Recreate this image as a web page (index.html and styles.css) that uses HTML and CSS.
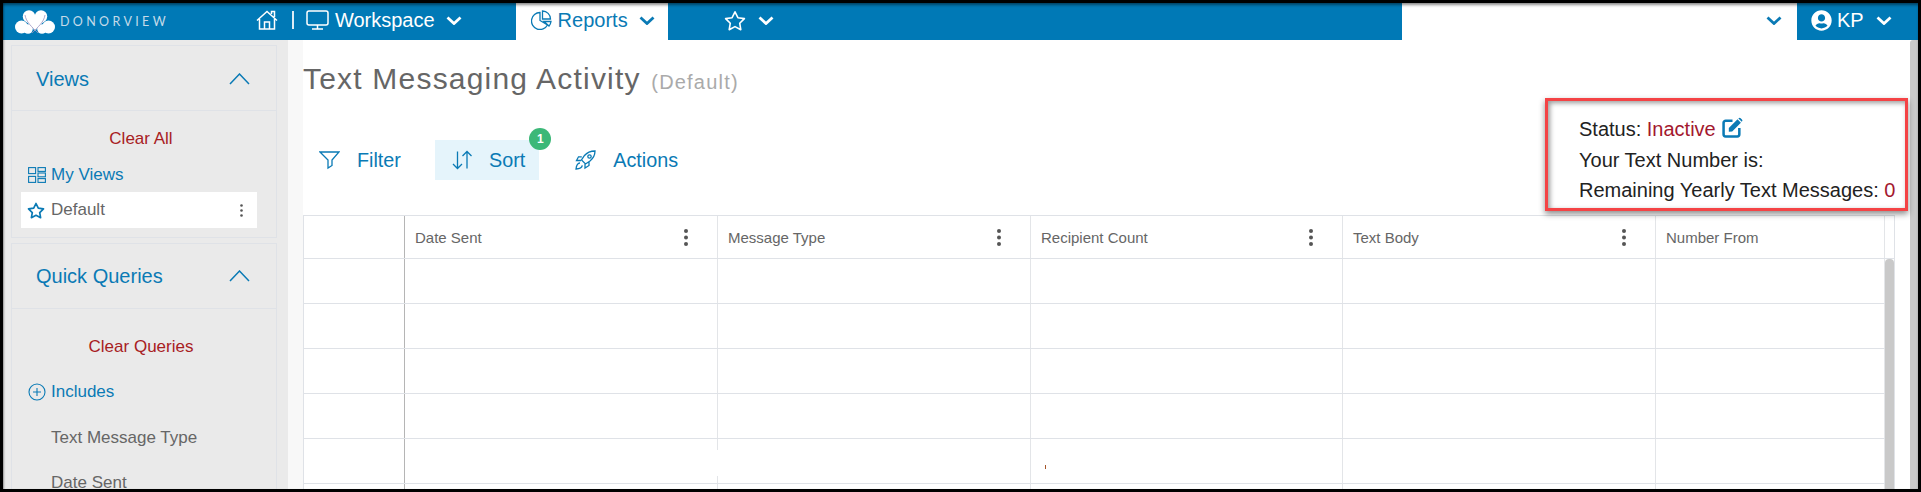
FILE: index.html
```html
<!DOCTYPE html>
<html lang="en">
<head>
<meta charset="utf-8">
<title>Text Messaging Activity</title>
<link rel="stylesheet" href="styles.css">
</head>
<body>
<div class="frame">
  <header class="nav">
    <div class="nav-left">
      <svg class="logo" viewBox="0 0 40 24">
        <g class="logo-fill">
          <circle cx="14" cy="6.500" r="6.200"/><circle cx="26" cy="6.500" r="6.200"/>
          <circle cx="6.500" cy="17" r="6.500"/><circle cx="33.500" cy="17" r="6.500"/>
          <circle cx="13" cy="19" r="4.800"/><circle cx="27" cy="19" r="4.800"/>
          <path d="M9 9 L20 21 L31 9 L26 3 L20 5 L14 3 Z"/>
        </g>
        <path class="logo-line" d="M10 5 C11 12 17 17 23 23 M30 5 C29 12 23 17 17 23"/>
      </svg>
      <span class="brand">DONORVIEW</span>
      <svg class="ico-home" viewBox="0 0 22 20"><path d="M1 10.500 L11 1.500 L21 10.500 M3.500 9 V19 H18.500 V9 M8.500 19 V12 H13.500 V19 M15.500 4 V1.500 H18.500 V7"/></svg>
      <span class="pipe"></span>
      <svg class="ico-monitor" viewBox="0 0 23 20"><rect x="1" y="1" width="21" height="14" rx="2"/><path d="M11.500 15 V19 M6 19 H17"/></svg>
      <span class="nav-text">Workspace</span>
      <svg class="chev chev-work" viewBox="0 0 16 9"><path d="M1.500 1.500 L8 7.500 L14.500 1.500"/></svg>
      <div class="tab">
        <svg class="ico-pie" viewBox="0 0 21 20"><path d="M9 2.500 A8.500 8.500 0 1 0 16.500 15 L9 10.500 Z M11.500 1 A8 8 0 0 1 19.500 9 H11.500 Z M13 11.500 H20 A8 8 0 0 1 18 16 Z"/></svg>
        <span class="nav-text">Reports</span>
        <svg class="chev chev-tab" viewBox="0 0 16 9"><path d="M1.500 1.500 L8 7.500 L14.500 1.500"/></svg>
      </div>
      <svg class="ico-star-nav" viewBox="0 0 22 21"><path d="M11 1.800 L13.900 7.700 L20.400 8.600 L15.700 13.200 L16.800 19.700 L11 16.600 L5.200 19.700 L6.300 13.200 L1.600 8.600 L8.100 7.700 Z"/></svg>
      <svg class="chev chev-fav" viewBox="0 0 16 9"><path d="M1.500 1.500 L8 7.500 L14.500 1.500"/></svg>
    </div>
    <div class="nav-gap">
      <svg class="chev chev-gap" viewBox="0 0 16 9"><path d="M1.500 1.500 L8 7.500 L14.500 1.500"/></svg>
    </div>
    <div class="nav-user">
      <svg class="ico-user" viewBox="0 0 496 512"><path fill-rule="evenodd" d="M248 8C111 8 0 119 0 256s111 248 248 248 248-111 248-248S385 8 248 8zm0 96c48.600 0 88 39.400 88 88s-39.400 88-88 88-88-39.400-88-88 39.400-88 88-88zm0 344c-58.700 0-111.300-26.600-146.500-68.200 18.800-35.400 55.600-59.800 98.500-59.800 2.400 0 4.800.4 7.100 1.100 13 4.200 26.600 6.900 40.900 6.900 14.300 0 28-2.700 40.900-6.900 2.300-.7 4.700-1.100 7.100-1.100 42.900 0 79.700 24.400 98.500 59.800C359.300 421.400 306.700 448 248 448z"/></svg>
      <span class="nav-text">KP</span>
      <svg class="chev chev-user" viewBox="0 0 16 9"><path d="M1.500 1.500 L8 7.500 L14.500 1.500"/></svg>
    </div>
  </header>

  <div class="layout">
    <aside class="sidebar">
      <section class="panel panel-views">
        <div class="panel-head head-views">
          <span>Views</span>
          <svg class="chev-up" viewBox="0 0 21 12"><path d="M1 11 L10.500 1 L20 11"/></svg>
        </div>
        <div class="panel-body views-body">
          <div class="clear">Clear All</div>
          <div class="vrow link">
            <svg class="ico-views" viewBox="0 0 18 16"><rect x=".6" y=".6" width="7" height="6"/><rect x=".6" y="9.400" width="7" height="6"/><rect x="10" y=".6" width="7.400" height="3.800"/><rect x="10" y="6" width="7.400" height="3.800"/><rect x="10" y="11.600" width="7.400" height="3.800"/></svg>
            <span>My Views</span>
          </div>
          <div class="vrow current">
            <svg class="ico-star" viewBox="0 0 18 17"><path d="M9 1.500 L11.300 6.200 L16.500 6.900 L12.700 10.600 L13.600 15.700 L9 13.300 L4.400 15.700 L5.300 10.600 L1.500 6.900 L6.700 6.200 Z"/></svg>
            <span class="grow">Default</span>
            <svg class="dots-sm" viewBox="0 0 3 13"><circle cx="1.500" cy="1.500" r="1.300"/><circle cx="1.500" cy="6.500" r="1.300"/><circle cx="1.500" cy="11.500" r="1.300"/></svg>
          </div>
        </div>
      </section>
      <section class="panel panel-queries">
        <div class="panel-head">
          <span>Quick Queries</span>
          <svg class="chev-up" viewBox="0 0 21 12"><path d="M1 11 L10.500 1 L20 11"/></svg>
        </div>
        <div class="panel-body queries-body">
          <div class="clear qrow">Clear Queries</div>
          <div class="vrow qrow link">
            <svg class="ico-plus" viewBox="0 0 18 18"><circle cx="9" cy="9" r="8"/><path d="M9 5 V13 M5 9 H13"/></svg>
            <span>Includes</span>
          </div>
          <div class="qrow qitem qitem-first">Text Message Type</div>
          <div class="qrow qitem">Date Sent</div>
        </div>
      </section>
    </aside>
    <div class="strip"></div>
    <main class="main">
      <div class="content">
        <h1 class="title">Text Messaging Activity <small>(Default)</small></h1>
        <div class="toolbar">
          <div class="tool">
            <svg class="ico-tool" viewBox="0 0 21 18"><path d="M1 1 H20 L13 9 V14.500 L9 17 V9 Z"/></svg>
            <span>Filter</span>
          </div>
          <div class="tool tool-active">
            <svg class="ico-tool" viewBox="0 0 21 20"><path d="M6.500 1.500 V18.500 M2 14 L6.500 18.500 L11 14 M16 18.500 V1.500 M11.500 6 L16 1.500 L20.500 6"/></svg>
            <span>Sort</span>
            <b class="badge">1</b>
          </div>
          <div class="tool">
            <svg class="ico-tool" viewBox="0 0 21 20"><path d="M20 1 C15.500 1 12 2.500 9.500 5.500 L6.500 10 L10.500 14 L15 11 C18 8.500 20 5 20 1 Z M6.800 6.800 H3.500 L1.500 10.500 H6 M14 12 V15.500 L10 18 V14 M5 13 C3 13 1.500 15 1 19 C5 18.800 7 17.300 7.300 15.300"/><circle cx="14.500" cy="6.500" r="1.700"/></svg>
            <span>Actions</span>
          </div>
        </div>
        <div class="table">
          <div class="thead">
            <div class="th th-blank"></div>
            <div class="th col-a"><span>Date Sent</span><svg class="dots" viewBox="0 0 4 17"><circle cx="2" cy="2" r="2"/><circle cx="2" cy="8.500" r="2"/><circle cx="2" cy="15" r="2"/></svg></div>
            <div class="th col-a"><span>Message Type</span><svg class="dots" viewBox="0 0 4 17"><circle cx="2" cy="2" r="2"/><circle cx="2" cy="8.500" r="2"/><circle cx="2" cy="15" r="2"/></svg></div>
            <div class="th col-b"><span>Recipient Count</span><svg class="dots" viewBox="0 0 4 17"><circle cx="2" cy="2" r="2"/><circle cx="2" cy="8.500" r="2"/><circle cx="2" cy="15" r="2"/></svg></div>
            <div class="th col-a"><span>Text Body</span><svg class="dots" viewBox="0 0 4 17"><circle cx="2" cy="2" r="2"/><circle cx="2" cy="8.500" r="2"/><circle cx="2" cy="15" r="2"/></svg></div>
            <div class="th col-last"><span>Number From</span></div>
          </div>
          <div class="tbody">
            <div class="rows">
              <div class="row"><i class="td td-blank"></i><i class="td col-a"></i><i class="td col-a"></i><i class="td col-b"></i><i class="td col-a"></i><i class="td col-last"></i></div>
              <div class="row"><i class="td td-blank"></i><i class="td col-a"></i><i class="td col-a"></i><i class="td col-b"></i><i class="td col-a"></i><i class="td col-last"></i></div>
              <div class="row"><i class="td td-blank"></i><i class="td col-a"></i><i class="td col-a"></i><i class="td col-b"></i><i class="td col-a"></i><i class="td col-last"></i></div>
              <div class="row"><i class="td td-blank"></i><i class="td col-a"></i><i class="td col-a"></i><i class="td col-b"></i><i class="td col-a"></i><i class="td col-last"></i></div>
              <div class="row"><i class="td td-blank"></i><i class="td col-a"></i><i class="td col-a"></i><i class="td col-b"></i><i class="td col-a"></i><i class="td col-last"></i></div>
              <div class="row"><i class="td td-blank"></i><i class="td col-a"></i><i class="td col-a"></i><i class="td col-b"></i><i class="td col-a"></i><i class="td col-last"></i></div>
            </div>
            <div class="table-thumb"></div>
          </div>
          <span class="line-mask"></span>
          <span class="speck"></span>
        </div>
      </div>
      <div class="page-thumb"></div>
      <div class="status">
        <div>Status: <span class="alert">Inactive</span> <svg class="ico-edit" viewBox="0 0 20 20"><path class="edit-box" d="M10 3.500 H3.500 A2 2 0 0 0 1.500 5.500 V16.500 A2 2 0 0 0 3.500 18.500 H14.500 A2 2 0 0 0 16.500 16.500 V10.500"/><path class="edit-pen" d="M6.500 10.500 L14.800 2.200 L18 5.400 L9.700 13.700 L6.500 14 Z M15.800 1.200 Q16.800 .2 17.800 1.200 L19 2.400 Q20 3.400 19 4.400 L18.800 4.600 L15.600 1.400 Z"/></svg></div>
        <div>Your Text Number is:</div>
        <div>Remaining Yearly Text Messages: <span class="alert">0</span></div>
      </div>
    </main>
  </div>
</div>
</body>
</html>
```
FILE: styles.css
```css
* { box-sizing: border-box; }
html, body { margin: 0; height: 492px; overflow: hidden; background: #000; }
body { font-family: "Liberation Sans", Arial, sans-serif; color: #666; }
svg { display: block; flex: none; }

.frame { position: relative; width: 1915px; height: 486px; margin: 3px 0 0 3px; overflow: hidden; background: #fff; }
.frame::after { content: ""; position: absolute; inset: 0; pointer-events: none; box-shadow: inset 0 3px 3px -1px rgba(0,0,0,.45), inset 2px 0 2px -1px rgba(0,0,0,.3); }

/* top bar */
.nav { display: flex; height: 37px; font-size: 20px; }
.nav-left { flex: 0 0 1398px; display: flex; align-items: center; padding: 0 0 3px 12px; background: #0079b6; color: #fff; }
.nav-gap { flex: 1; display: flex; align-items: center; justify-content: flex-end; padding: 0 15px 3px 0; background: #fff; border-left: 1px solid #0079b6; }
.nav-user { flex: 0 0 121px; display: flex; align-items: center; padding: 0 0 3px 14px; background: #0079b6; color: #fff; }
.nav-text { line-height: 24px; }

.logo { width: 40px; height: 24px; margin-top: 3px; }
.logo-fill { fill: #fff; }
.logo-line { fill: none; stroke: #9a93c0; stroke-width: .8; }
.brand { margin-left: 5px; font-size: 12.500px; letter-spacing: 3.350px; color: #c5dbe9; line-height: 16px; margin-top: 3px; font-family: Lato, "Liberation Sans", sans-serif; }
.ico-home { width: 22px; height: 20px; margin-left: 87px; fill: none; stroke: #fff; stroke-width: 1.5; }
.pipe { width: 2px; height: 18px; margin: 0 12px 0 14px; background: #dcecf5; }
.ico-monitor { width: 23px; height: 20px; margin-right: 6px; fill: none; stroke: #fff; stroke-width: 1.5; }

.chev { width: 16px; height: 9px; fill: none; stroke: #fff; stroke-width: 2.800; }
.chev-work { margin-left: 11px; }
.tab { display: flex; align-items: center; align-self: stretch; margin: 0 0 -3px 54px; padding: 0 13px 3px 15px; background: #fff; color: #0a7ab5; }
.ico-pie { width: 21px; height: 20px; margin-right: 6px; fill: none; stroke: #0a7ab5; stroke-width: 1.300; }
.chev-tab { margin-left: 11px; stroke: #0a7ab5; }
.ico-star-nav { width: 22px; height: 21px; margin-left: 56px; fill: none; stroke: #fff; stroke-width: 1.600; stroke-linejoin: round; }
.chev-fav { margin-left: 12px; }
.chev-gap { stroke: #0a7ab5; }
.ico-user { width: 21px; height: 21px; margin-right: 5px; fill: #fff; }
.chev-user { margin-left: 12px; }

/* layout */
.layout { display: flex; height: 449px; }
.sidebar { flex: 0 0 285px; padding: 5px 11px 0 8px; background: #eaeaea; font-size: 17px; }
.strip { flex: 0 0 15px; background: #f8f8f8; }
.main { position: relative; flex: 1; display: flex; background: #fff; }
.content { flex: 1; padding-top: 21px; }
.page-thumb { flex: 0 0 8px; background: #c9c9c9; border-radius: 3px 0 0 0; }

/* sidebar panels */
.panel { border: 1px solid #dfe2e7; background: #eaeaea; }
.panel-views { height: 193px; }
.panel-queries { margin-top: 5px; border-bottom: 0; }
.panel-head { display: flex; align-items: center; justify-content: space-between; height: 65px; padding: 0 26px 0 24px; border-bottom: 1px solid #dfe2e7; color: #0a7ab5; font-size: 20px; }
.head-views { padding-top: 2px; }
.chev-up { width: 21px; height: 12px; fill: none; stroke: #0a7ab5; stroke-width: 1.500; }
.views-body { padding-top: 10px; }
.views-body .link { height: 35px; }
.queries-body { padding-top: 15px; }
.clear { height: 36px; margin-right: 6px; line-height: 36px; text-align: center; color: #a8201f; }
.vrow { display: flex; align-items: center; gap: 6px; height: 36px; width: 236px; margin-left: 9px; padding-left: 6px; }
.link { color: #0a7ab5; padding-left: 7px; gap: 5px; }
.current { background: #fff; padding-right: 14px; color: #666; }
.grow { flex: 1; }
.ico-views { width: 18px; height: 16px; fill: none; stroke: #0a7ab5; stroke-width: 1.100; }
.ico-star { width: 18px; height: 17px; fill: none; stroke: #0a7ab5; stroke-width: 1.700; stroke-linejoin: round; }
.dots-sm { width: 3px; height: 13px; fill: #555; }
.ico-plus { width: 18px; height: 18px; fill: none; stroke: #0a7ab5; stroke-width: 1.100; }
.qrow { height: 45px; line-height: 45px; }
.qitem { padding-left: 39px; color: #666; }
.qitem-first { margin-top: 1px; }

/* title + toolbar */
.title { margin: 0; height: 36px; font-size: 30px; font-weight: 400; line-height: 36px; letter-spacing: 1.200px; color: #666; }
.title small { margin-left: 1px; font-size: 20px; letter-spacing: 1.200px; color: #aaa; }
.toolbar { display: flex; gap: 20px; height: 40px; margin-top: 43px; font-size: 19.800px; color: #0a7ab5; }
.tool { position: relative; display: flex; align-items: center; gap: 17px; padding: 0 14px 0 16px; }
.tool-active { background: #e5f4fb; }
.ico-tool { width: 21px; height: 20px; fill: none; stroke: #0a7ab5; stroke-width: 1.300; }
.badge { position: absolute; top: -12px; right: -12px; width: 22px; height: 22px; border-radius: 50%; background: #3cb878; color: #fff; font-size: 12px; line-height: 22px; text-align: center; }

/* table */
.table { position: relative; width: 1592px; margin-top: 35px; border: solid #dfe2e7; border-width: 1px 1px 0 1px; }
.thead { display: flex; height: 43px; border-bottom: 1px solid #dfe2e7; font-size: 15px; color: #666; }
.th { display: flex; align-items: center; justify-content: space-between; padding: 0 29px 0 10px; border-right: 1px solid #e3e5e8; }
.th-blank, .td-blank { flex: 0 0 101px; border-right: 1px solid #b5b5b5; }
.col-a { flex: 0 0 313px; }
.col-b { flex: 0 0 312px; }
.col-last { flex: 0 0 229px; }
.dots { width: 4px; height: 17px; fill: #555; }
.tbody { display: flex; }
.rows { flex: 0 0 1581px; }
.row { display: flex; height: 45px; border-bottom: 1px solid #dfe2e7; }
.td { display: block; border-right: 1px solid #e3e5e8; }
.td-blank { border-right-color: #b5b5b5; }
.table-thumb { flex: 0 0 9px; height: 240px; background: #c9c9c9; border-radius: 4px 4px 0 0; }
.line-mask { position: absolute; left: 413px; top: 234px; width: 1px; height: 26px; background: #fff; }
.speck { position: absolute; left: 741px; top: 249px; width: 1px; height: 4px; background: #a5552a; }

/* status box */
.status { position: absolute; top: 58px; right: 10px; width: 363px; height: 113px; padding: 13px 0 0 31px; border: 3px solid #f44345; background: #fff; box-shadow: inset 2px 2px 5px rgba(0,0,0,.4), 0 3px 6px rgba(0,0,0,.45); font-size: 20px; line-height: 30.500px; color: #222; }
.alert { color: #a3182e; }
.ico-edit { display: inline-block; width: 21px; height: 21px; margin-left: 1px; vertical-align: -2px; }
.edit-box { fill: none; stroke: #0a7ab5; stroke-width: 2.400; }
.edit-pen { fill: #0a7ab5; }
```
